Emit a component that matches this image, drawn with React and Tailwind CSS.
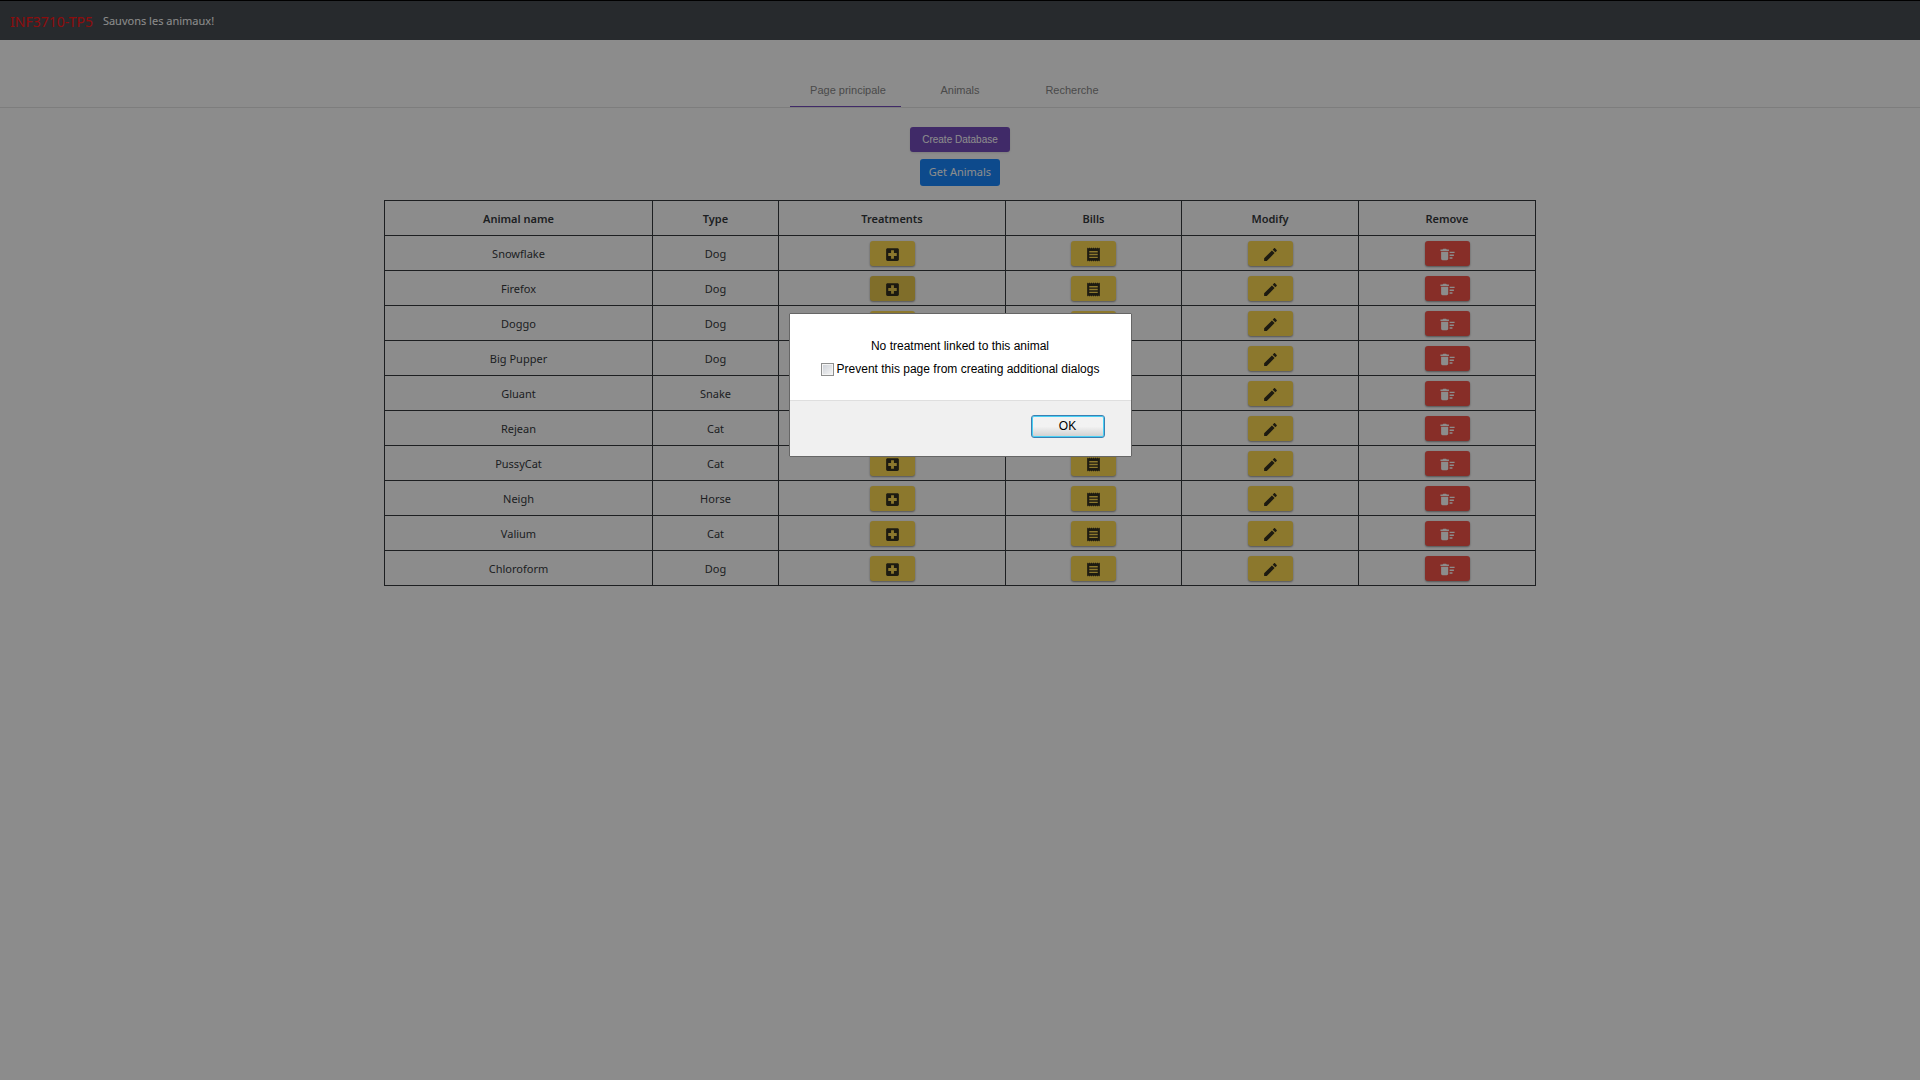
import React from "react";

const animals = [
  ["Snowflake", "Dog"],
  ["Firefox", "Dog"],
  ["Doggo", "Dog"],
  ["Big Pupper", "Dog"],
  ["Gluant", "Snake"],
  ["Rejean", "Cat"],
  ["PussyCat", "Cat"],
  ["Neigh", "Horse"],
  ["Valium", "Cat"],
  ["Chloroform", "Dog"],
];

const icons = {
  treatments:
    "M19 3H5c-1.1 0-1.99.9-1.99 2L3 19c0 1.1.9 2 2 2h14c1.1 0 2-.9 2-2V5c0-1.1-.9-2-2-2zm-1 11h-4v4h-4v-4H6v-4h4V6h4v4h4v4z",
  bills:
    "M18 17H6v-2h12v2zm0-4H6v-2h12v2zm0-4H6V7h12v2zM3 22l1.5-1.5L6 22l1.5-1.5L9 22l1.5-1.5L12 22l1.5-1.5L15 22l1.5-1.5L18 22l1.5-1.5L21 22V2l-1.5 1.5L18 2l-1.5 1.5L15 2l-1.5 1.5L12 2l-1.5 1.5L9 2 7.5 3.5 6 2 4.5 3.5 3 2v20z",
  modify:
    "M3 17.25V21h3.75L17.81 9.94l-3.75-3.75L3 17.25zM20.71 7.04c.39-.39.39-1.02 0-1.41l-2.34-2.34c-.39-.39-1.02-.39-1.41 0l-1.83 1.83 3.75 3.75 1.83-1.83z",
  remove:
    "M15 16h4v2h-4zm0-8h7v2h-7zm0 4h6v2h-6zM3 18c0 1.1.9 2 2 2h6c1.1 0 2-.9 2-2V8H3v10zM14 5h-3l-1-1H6L5 5H2v2h12z",
};

const columns = [
  ["Animal name", "w-[268px]"],
  ["Type", "w-[126px]"],
  ["Treatments", "w-[227px]"],
  ["Bills", "w-[176px]"],
  ["Modify", "w-[177px]"],
  ["Remove", "w-[177px]"],
];

const yellow = "bg-[#ffd740] text-black/87";
const yellowFocused = "bg-[#e6c23a] text-black/87";
const red = "bg-[#f44336] text-white";

function ActionButton({ icon, label, tone }) {
  return (
    <button
      aria-label={label}
      className={`mx-auto flex h-[25px] w-[45px] items-center justify-center rounded-[3px] pt-0.5 shadow-[0_1px_2px_rgba(0,0,0,0.45)] ${tone}`}
    >
      <svg viewBox="0 0 24 24" className="h-[17px] w-[17px]" fill="currentColor" aria-hidden="true">
        <path d={icons[icon]} />
      </svg>
    </button>
  );
}

function Tab({ children, active }) {
  return (
    <button
      role="tab"
      aria-selected={!!active}
      className="relative h-[33px] w-28 font-['Liberation_Sans',sans-serif] text-[11px] text-[#7a7a7a]"
    >
      {children}
      {active && <span className="absolute bottom-0 -left-0.5 h-px w-[111px] bg-[#673ab7]" />}
    </button>
  );
}

export default function App() {
  return (
    <div className="min-h-screen bg-white font-['Noto_Sans',sans-serif] text-[11px] text-[#212529]">
      <header className="flex h-10 items-center gap-[10px] border-t border-black bg-[#343a40] px-[10px] pt-0.5">
        <a href="#" className="text-[14px] text-[#ff0000]">INF3710-TP5</a>
        <span className="text-white">Sauvons les animaux!</span>
      </header>

      <nav role="tablist" className="mt-[34px] flex justify-center border-b border-[#e0e0e0]">
        <Tab active>Page principale</Tab>
        <Tab>Animals</Tab>
        <Tab>Recherche</Tab>
      </nav>

      <main className="flex flex-col items-center pt-[19px]">
        <button className="h-[25px] rounded-[3px] bg-[#673ab7] px-3 font-['Liberation_Sans',sans-serif] text-[10px] text-white shadow">
          Create Database
        </button>
        <button className="mt-[7px] h-[27px] rounded-[3px] bg-[#007bff] px-[9px] text-white">Get Animals</button>

        <table className="mt-3.5 w-3/5 table-fixed border-collapse text-center">
          <thead>
            <tr className="h-[35px]">
              {columns.map(([title, width]) => (
                <th key={title} className={`border border-[#212529] pt-0.5 font-semibold ${width}`}>
                  {title}
                </th>
              ))}
            </tr>
          </thead>
          <tbody>
            {animals.map(([name, type], i) => (
              <tr key={name} className="h-[35px]">
                <td className="border border-[#212529] pt-0.5">{name}</td>
                <td className="border border-[#212529] pt-0.5">{type}</td>
                <td className="border border-[#212529]">
                  <ActionButton
                    icon="treatments"
                    label={`Treatments of ${name}`}
                    tone={i === 1 ? yellowFocused : yellow}
                  />
                </td>
                <td className="border border-[#212529]">
                  <ActionButton icon="bills" label={`Bills of ${name}`} tone={yellow} />
                </td>
                <td className="border border-[#212529]">
                  <ActionButton icon="modify" label={`Modify ${name}`} tone={yellow} />
                </td>
                <td className="border border-[#212529]">
                  <ActionButton icon="remove" label={`Remove ${name}`} tone={red} />
                </td>
              </tr>
            ))}
          </tbody>
        </table>
      </main>

      <div className="fixed inset-x-0 top-px bottom-0 flex items-start justify-center bg-[#1a1a1a]/50 pt-[312px]">
        <div
          role="alertdialog"
          aria-labelledby="dialog-message"
          className="w-[343px] rounded-[1px] border border-[#666] bg-white font-['Liberation_Sans',sans-serif] text-[12px] text-black"
        >
          <div className="flex h-[87px] flex-col items-center border-b border-[#dfdfdf] pt-6 leading-[17px]">
            <p id="dialog-message">No treatment linked to this animal</p>
            <label className="mt-[6px] flex items-center gap-[3px]">
              <input
                type="checkbox"
                className="h-[13px] w-[13px] appearance-none border border-[#8e8f8f] bg-linear-to-br from-[#cbcfd5] to-[#f6f6f6] shadow-[inset_0_0_0_1px_#f4f4f4]"
              />
              Prevent this page from creating additional dialogs
            </label>
          </div>
          <div className="flex h-[55px] justify-end bg-[#f0f0f0] pt-[14px] pr-[26px]">
            <button className="h-[23px] w-[74px] rounded-[3px] border border-[#3c7fb1] bg-linear-to-b from-[#f2f2f2] from-50% to-[#cfcfcf] to-100% pb-0.5 shadow-[inset_0_0_0_1px_#48d0f5]">
              OK
            </button>
          </div>
        </div>
      </div>
    </div>
  );
}
